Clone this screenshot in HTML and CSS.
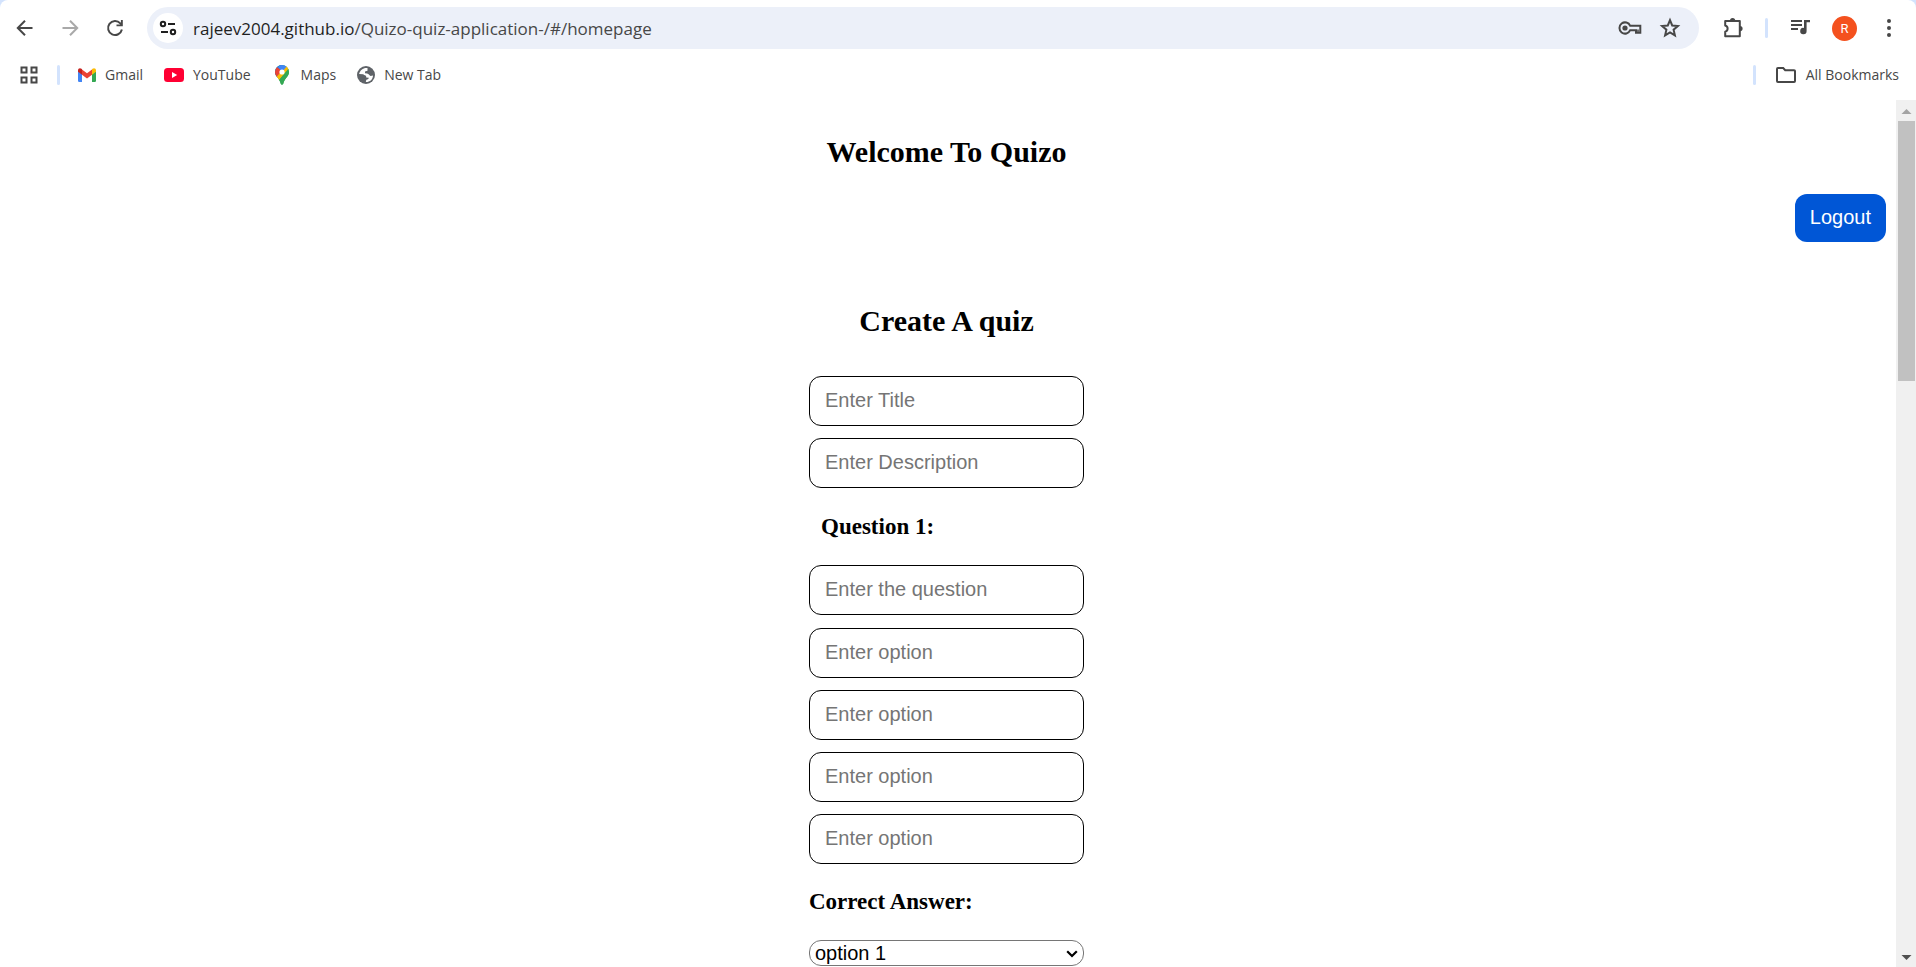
FILE: index.html
```html
<!DOCTYPE html>
<html lang="en">
<head>
<meta charset="utf-8">
<title>Quizo</title>
<link rel="stylesheet" href="styles.css">
</head>
<body>
<div class="browser">
  <header class="chrome">
    <div class="toolbar">
      <nav class="nav-buttons" aria-label="Navigation">
        <button class="icon-btn" type="button" aria-label="Back">
          <svg class="icon" viewBox="0 0 24 24"><path d="M19.500 12H5M12 4.800L4.800 12l7.200 7.200" fill="none" stroke="currentColor" stroke-width="2"/></svg>
        </button>
        <button class="icon-btn icon-btn-off" type="button" aria-label="Forward">
          <svg class="icon" viewBox="0 0 24 24"><path d="M4.500 12H19M12 4.800l7.200 7.200-7.200 7.200" fill="none" stroke="currentColor" stroke-width="2"/></svg>
        </button>
        <button class="icon-btn" type="button" aria-label="Reload">
          <svg class="icon" viewBox="0 0 24 24"><path d="M18.900 13.500A7 7 0 1 1 17.300 7.300L18.600 8.700" fill="none" stroke="currentColor" stroke-width="2"/><path d="M19.800 4v6.300h-6.300V8.400h4.400V4z" fill="currentColor"/></svg>
        </button>
      </nav>
      <div class="omnibox">
        <button class="site-info" type="button" aria-label="Site information">
          <svg class="icon-small" viewBox="0 0 18 18"><g fill="none" stroke="currentColor" stroke-width="2"><circle cx="4" cy="5" r="2.200"/><path d="M9 5h7M2 13h7"/><circle cx="14" cy="13" r="2.200"/></g></svg>
        </button>
        <div class="url"><span class="url-host">rajeev2004.github.io</span>/Quizo-quiz-application-/#/homepage</div>
        <button class="icon-btn" type="button" aria-label="Passwords">
          <svg class="icon" viewBox="0 0 24 24"><circle cx="7" cy="12" r="2.600" fill="currentColor"/><path d="M12.200 9.800H22.300v6.900h-4.300V14.200h-5.800A5.600 5.600 0 1 1 12.200 9.800z" fill="none" stroke="currentColor" stroke-width="2"/><path d="M20 13.500v3" stroke="currentColor" stroke-width="1.500"/></svg>
        </button>
        <button class="icon-btn" type="button" aria-label="Bookmark this page">
          <svg class="icon" viewBox="0 0 24 24"><path d="M12 4.200l2.200 5.300 5.700.5-4.300 3.700 1.300 5.600-4.900-3-4.900 3 1.300-5.600L4.100 10l5.700-.5z" fill="none" stroke="currentColor" stroke-width="2"/></svg>
        </button>
      </div>
      <div class="toolbar-end">
        <button class="icon-btn" type="button" aria-label="Extensions">
          <svg class="icon" viewBox="0 0 24 24"><path d="M4.200 5h14.600v15.200H4.200v-4.500a3.200 3.200 0 0 0 0-6.200z" fill="none" stroke="currentColor" stroke-width="2" stroke-linejoin="round"/><path d="M9 4.500a2.600 2.600 0 0 1 5.200 0zM19 10a2.600 2.600 0 0 1 0 5.200z" fill="currentColor"/></svg>
        </button>
        <span class="divider"></span>
        <button class="icon-btn" type="button" aria-label="Media controls">
          <svg class="icon" viewBox="0 0 24 24"><path d="M3 5h11M3 9h11M3 13h7" stroke="currentColor" stroke-width="2"/><path d="M16 4h6v2.200h-3.400V15a3.200 3.200 0 1 1-2.600-3.100z" fill="currentColor"/></svg>
        </button>
        <button class="avatar" type="button" aria-label="Profile">R</button>
        <button class="icon-btn" type="button" aria-label="Menu">
          <svg class="icon" viewBox="0 0 24 24"><g fill="currentColor"><circle cx="12" cy="5" r="2"/><circle cx="12" cy="12" r="2"/><circle cx="12" cy="19" r="2"/></g></svg>
        </button>
      </div>
    </div>
    <nav class="bookmarks" aria-label="Bookmarks">
      <button class="apps" type="button" aria-label="Apps">
        <svg class="icon-small" viewBox="0 0 18 18"><path d="M1.500 1.500h5v5h-5zM11.500 1.500h5v5h-5zM1.500 11.500h5v5h-5zM11.500 11.500h5v5h-5z" fill="none" stroke="currentColor" stroke-width="2"/></svg>
      </button>
      <span class="divider"></span>
      <div class="bookmark-list">
        <a class="bookmark" href="#gmail">
          <svg class="icon-small" viewBox="0 0 18 14"><path d="M0 3v9.800Q0 14 1.200 14H4V6z" fill="#4285f4"/><path d="M14 6v8h2.800Q18 14 18 12.800V3z" fill="#34a853"/><path d="M4 1.500L9 5.300l5-3.800V6.800L9 10.600 4 6.800z" fill="#ea4335"/><path d="M0 2.200C0 .2 2.200-.4 3.500.8L4 1.300v5.500L0 3.700z" fill="#c5221f"/><path d="M18 2.200c0-2-2.200-2.600-3.500-1.400l-.5.500v5.500l4-3.100z" fill="#fbbc04"/></svg>
          <span>Gmail</span>
        </a>
        <a class="bookmark" href="#youtube">
          <svg class="icon-wide" viewBox="0 0 20 14"><rect width="20" height="14" rx="3.500" fill="#ff0033"/><path d="M8 4l5.200 3L8 10z" fill="#fff"/></svg>
          <span>YouTube</span>
        </a>
        <a class="bookmark" href="#maps">
          <svg class="icon-pin" viewBox="0 0 14 20"><clipPath id="pin"><path d="M7 0a7 7 0 0 1 7 7c0 4.500-4.600 6.400-5.700 11.500C8 20 6 20 5.700 18.500 4.600 13.400 0 11.500 0 7a7 7 0 0 1 7-7z"/></clipPath><g clip-path="url(#pin)"><path d="M0 0h14v20H0z" fill="#34a853"/><path d="M0 14L10 2 7 0H0z" fill="#1a73e8"/><path d="M-1 4.500L2 2l5 4-6 7h-2z" fill="#ea4335"/><path d="M1 12.500L12 0l2 4L3.500 16z" fill="#fbbc04"/><path d="M3 2l4-3 5 2-5 6z" fill="#4285f4"/><path d="M14 3L4 15v5h10z" fill="#34a853"/></g><circle cx="7" cy="7" r="2.600" fill="#fff"/></svg>
          <span>Maps</span>
        </a>
        <a class="bookmark" href="#newtab">
          <svg class="icon-small" viewBox="0 0 18 18"><circle cx="9" cy="9" r="9" fill="#5f6368"/><path d="M10.500 2C6.500 1.400 2.900 4.100 2.100 8L6.300 8.300C7 9.600 9.200 9.200 9.200 10.600V11.600L11.800 11.800C11.800 13 10.800 13.500 9.300 13.800L8.800 16C13 16.100 16 13 16 9.400L13.600 10C12.500 10 12 8 10 7.600L8 7.200V5.600L10.500 4.700z" fill="#fff"/></svg>
          <span>New Tab</span>
        </a>
      </div>
      <span class="divider"></span>
      <button class="bookmark bookmark-all" type="button">
        <svg class="icon-wide" viewBox="0 0 20 16"><path d="M1 1.900Q1 1 1.900 1H7.200l2 2.200h8.900q.9 0 .9.900v10q0 .9-.9.900H1.900q-.9 0-.9-.9z" fill="none" stroke="currentColor" stroke-width="2"/></svg>
        <span>All Bookmarks</span>
      </button>
    </nav>
  </header>

  <div class="viewport">
    <main class="page">
      <h1 class="title">Welcome To Quizo</h1>
      <button class="logout" type="button">Logout</button>
      <h2 class="title title-form">Create A quiz</h2>
      <form class="quiz">
        <div class="fields">
          <input class="field" type="text" placeholder="Enter Title" aria-label="Title">
          <input class="field" type="text" placeholder="Enter Description" aria-label="Description">
        </div>
        <h3 class="label label-question">Question 1:</h3>
        <input class="field" type="text" placeholder="Enter the question" aria-label="Question 1">
        <div class="fields fields-options">
          <input class="field" type="text" placeholder="Enter option" aria-label="Option 1">
          <input class="field" type="text" placeholder="Enter option" aria-label="Option 2">
          <input class="field" type="text" placeholder="Enter option" aria-label="Option 3">
          <input class="field" type="text" placeholder="Enter option" aria-label="Option 4">
        </div>
        <label class="label" for="answer">Correct Answer:</label>
        <div class="select-wrap">
          <select class="answer" id="answer">
            <option>option 1</option>
            <option>option 2</option>
            <option>option 3</option>
            <option>option 4</option>
          </select>
          <svg class="chevron" viewBox="0 0 12 8"><path d="M1.200 1.200L6 6l4.800-4.800" fill="none" stroke="#000" stroke-width="2.200"/></svg>
        </div>
      </form>
    </main>
    <div class="scrollbar" aria-hidden="true">
      <svg class="scroll-arrow" viewBox="0 0 20 20"><path d="M5.500 14L10.500 9l5 5z" fill="#a3a3a3"/></svg>
      <div class="scroll-track"><div class="scroll-thumb"></div></div>
      <svg class="scroll-arrow" viewBox="0 0 20 20"><path d="M5.500 8l5 5 5-5z" fill="#505050"/></svg>
    </div>
  </div>
</div>
</body>
</html>
```
FILE: styles.css
```css
* {
  box-sizing: border-box;
}

body {
  margin: 0;
  background: #fff;
  color: #000;
  font-family: "Liberation Serif", "Times New Roman", serif;
  font-size: 20px;
}

button,
a {
  padding: 0;
  border: 0;
  background: none;
  color: inherit;
  font: inherit;
  text-decoration: none;
}

svg {
  display: block;
  flex: none;
}

.browser {
  display: flex;
  flex-direction: column;
  min-height: 100vh;
}

/* Browser toolbar */
.chrome {
  background: #d3e3fd;
  color: #474747;
  font-family: "Open Sans", "Noto Sans", sans-serif;
  font-size: 14px;
}

.toolbar {
  display: flex;
  align-items: center;
  height: 56px;
  padding: 0 12px 0 10px;
  background: #fff;
  border-radius: 8px 8px 0 0;
}

.nav-buttons {
  display: flex;
  gap: 15px;
  margin-right: 17px;
}

.icon-btn {
  display: flex;
  align-items: center;
  justify-content: center;
  width: 30px;
  height: 30px;
}

.icon-btn-off {
  color: #a9a9a9;
}

.icon {
  width: 24px;
  height: 24px;
}

.icon-small {
  width: 18px;
  height: 18px;
}

.omnibox {
  display: flex;
  flex: 1;
  align-items: center;
  gap: 10px;
  height: 42px;
  padding: 0 14px 0 6px;
  background: #ecf0f9;
  border-radius: 21px;
}

.site-info {
  display: flex;
  align-items: center;
  justify-content: center;
  width: 30px;
  height: 30px;
  background: #fff;
  border-radius: 50%;
  color: #1f1f1f;
}

.url {
  flex: 1;
  font-size: 17px;
}

.url-host {
  color: #1f1f1f;
}

.toolbar-end {
  display: flex;
  align-items: center;
  gap: 17px;
  margin-left: 19px;
}

.divider {
  width: 3px;
  height: 20px;
  background: #d3e3fd;
  border-radius: 2px;
}

.avatar {
  width: 25px;
  height: 25px;
  background: #f4511e;
  border-radius: 50%;
  color: #fff;
  font-family: Roboto, sans-serif;
  font-size: 13px;
}

.bookmarks {
  display: flex;
  align-items: center;
  height: 44px;
  padding: 0 17px 7px 20px;
  background: #fff;
}

.apps {
  margin-right: 19px;
}

.bookmark-list {
  display: flex;
  flex: 1;
  gap: 21px;
  margin-left: 18px;
}

.bookmark {
  display: flex;
  align-items: center;
  gap: 9px;
}

.bookmark-all {
  gap: 10px;
  margin-left: 20px;
}

.icon-wide {
  width: 20px;
  height: 16px;
}

.icon-pin {
  width: 20px;
  height: 20px;
}

/* Page */
.viewport {
  display: flex;
  flex: 1;
}

.page {
  display: flex;
  flex: 1;
  flex-direction: column;
  align-items: center;
  padding: 0 10px 0 7px;
}

.title {
  margin: 35px 0 25px;
  font-size: 30px;
  line-height: 34px;
}

.title-form {
  margin: 62px 0 38px;
}

.logout {
  align-self: flex-end;
  padding: 11px 15px 13px;
  background: #0056d6;
  border-radius: 12px;
  color: #fff;
  font-family: "Liberation Sans", Arial, sans-serif;
  font-size: 20px;
  line-height: 24px;
}

.quiz {
  width: 275px;
}

.fields {
  display: grid;
  gap: 12px;
}

.fields-options {
  margin-top: 13px;
}

.field {
  display: block;
  width: 100%;
  height: 50px;
  padding: 0 15px 2px;
  border: 1px solid #000;
  border-radius: 12px;
  font-family: "Liberation Sans", Arial, sans-serif;
  font-size: 20px;
}

.field::placeholder {
  color: #757575;
}

.label {
  display: block;
  margin: 24px 0;
  font-size: 23px;
  font-weight: bold;
  line-height: 28px;
}

.label-question {
  margin: 25px 0 24px 12px;
}

.select-wrap {
  position: relative;
}

.answer {
  display: block;
  width: 100%;
  height: 26px;
  padding: 0 5px;
  appearance: none;
  background: #fff;
  border: 1px solid #767676;
  border-radius: 12px;
  color: #000;
  font-family: "Liberation Sans", Arial, sans-serif;
  font-size: 20px;
  line-height: 24px;
}

.chevron {
  position: absolute;
  top: 10px;
  right: 6px;
  width: 12px;
  height: 8px;
  pointer-events: none;
}

/* Scrollbar */
.scrollbar {
  display: flex;
  flex-direction: column;
  width: 20px;
  background: #f0f0f0;
}

.scroll-arrow {
  width: 20px;
  height: 20px;
}

.scroll-track {
  flex: 1;
  padding: 1px 1px 0 2px;
}

.scroll-thumb {
  height: 260px;
  background: #c1c1c1;
}
```
